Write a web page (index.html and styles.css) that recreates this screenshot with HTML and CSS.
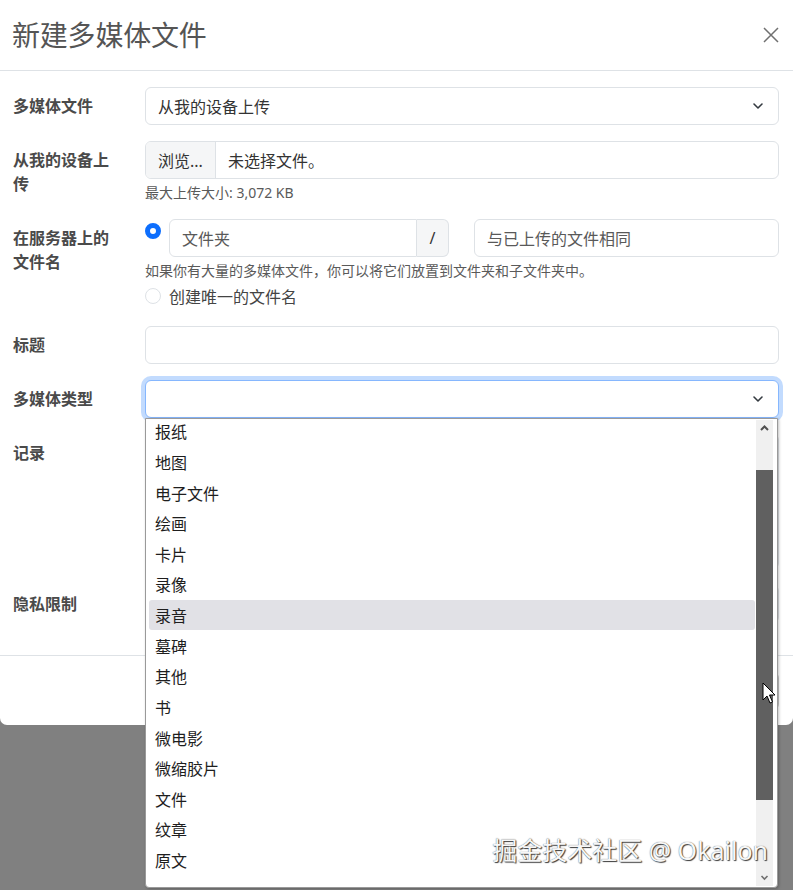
FILE: index.html
```html
<!DOCTYPE html>
<html lang="zh-CN">
<head>
<meta charset="utf-8">
<title>新建多媒体文件</title>
<link rel="stylesheet" href="styles.css">
</head>
<body>
<div class="modal">
  <div class="modal-header">
    <h1 class="modal-title">新建多媒体文件</h1>
    <svg class="btn-close" width="16" height="16" viewBox="0 0 16 16"><path d="M1 1L15 15M15 1L1 15" stroke="#707070" stroke-width="1.5" fill="none"/></svg>
  </div>
  <div class="modal-body">
    <div class="row">
      <div class="label">多媒体文件</div>
      <div class="field">
        <div class="control select"><span>从我的设备上传</span><svg class="chev" width="16" height="12" viewBox="0 0 16 12"><path d="M4 4L8 8L12 4" stroke="#343a40" stroke-width="1.6" fill="none" stroke-linecap="round" stroke-linejoin="round"/></svg></div>
      </div>
    </div>
    <div class="row">
      <div class="label">从我的设备上传</div>
      <div class="field">
        <div class="control file"><span class="file-btn">浏览...</span><span class="file-name">未选择文件。</span></div>
        <div class="help">最大上传大小: 3,072 KB</div>
      </div>
    </div>
    <div class="row">
      <div class="label">在服务器上的文件名</div>
      <div class="field">
        <div class="radio-line">
          <span class="radio checked"></span>
          <div class="input-group">
            <span class="control ig-input placeholder">文件夹</span>
            <span class="ig-addon">/</span>
          </div>
          <span class="control grow placeholder">与已上传的文件相同</span>
        </div>
        <div class="help">如果你有大量的多媒体文件，你可以将它们放置到文件夹和子文件夹中。</div>
        <div class="radio-line2"><span class="radio"></span><span class="radio-label">创建唯一的文件名</span></div>
      </div>
    </div>
    <div class="row">
      <div class="label">标题</div>
      <div class="field"><div class="control"></div></div>
    </div>
    <div class="row">
      <div class="label">多媒体类型</div>
      <div class="field">
        <div class="control select focused"><span></span><svg class="chev" width="16" height="12" viewBox="0 0 16 12"><path d="M4 4L8 8L12 4" stroke="#343a40" stroke-width="1.6" fill="none" stroke-linecap="round" stroke-linejoin="round"/></svg></div>
      </div>
    </div>
    <div class="row">
      <div class="label">记录</div>
      <div class="field"><div class="control textarea"></div></div>
    </div>
    <div class="row">
      <div class="label">隐私限制</div>
      <div class="field">
        <div class="control select"><span></span><svg class="chev" width="16" height="12" viewBox="0 0 16 12"><path d="M4 4L8 8L12 4" stroke="#343a40" stroke-width="1.6" fill="none" stroke-linecap="round" stroke-linejoin="round"/></svg></div>
      </div>
    </div>
  </div>
  <div class="modal-footer">
    <span class="btn">关闭</span>
    <span class="btn">保存</span>
  </div>
</div>

<div class="dropdown">
  <div class="list">
    <div class="list-inner">
      <div class="item">报纸</div>
      <div class="item">地图</div>
      <div class="item">电子文件</div>
      <div class="item">绘画</div>
      <div class="item">卡片</div>
      <div class="item">录像</div>
      <div class="item active">录音</div>
      <div class="item">墓碑</div>
      <div class="item">其他</div>
      <div class="item">书</div>
      <div class="item">微电影</div>
      <div class="item">微缩胶片</div>
      <div class="item">文件</div>
      <div class="item">纹章</div>
      <div class="item">原文</div>
    </div>
  </div>
  <div class="scrollbar">
    <div class="sb-btn"><svg width="17" height="17" viewBox="0 0 17 17"><path d="M5 10L8.5 6.5L12 10" stroke="#505050" stroke-width="2" fill="none"/></svg></div>
    <div class="sb-gap-top"></div>
    <div class="sb-thumb"></div>
    <div class="sb-gap-bottom"></div>
    <div class="sb-btn"><svg width="17" height="17" viewBox="0 0 17 17"><path d="M5.5 7L8.5 10L11.5 7" stroke="#707070" stroke-width="1.6" fill="none"/></svg></div>
  </div>
</div>

<svg class="cursor" width="14" height="24" viewBox="0 0 14 24"><path d="M1 1L1 18L5 14L8 21L10.5 20L7.5 13L13 13Z" fill="#fff" stroke="#000" stroke-width="1" stroke-linejoin="round"/></svg>

<div class="watermark">掘金技术社区 @ Okailon</div>
</body>
</html>
```

FILE: styles.css
```css
* { box-sizing: border-box; }

html, body {
  margin: 0;
  padding: 0;
}

body {
  background: #808080;
  width: 793px;
  height: 890px;
  overflow: hidden;
  position: relative;
  font-family: "Noto Sans", "Noto Sans CJK SC", sans-serif;
  font-size: 16px;
  color: #333;
}

.modal {
  background: #fff;
  border-radius: 0 0 7px 7px;
  width: 793px;
}

.modal-header {
  height: 71px;
  border-bottom: 1px solid #dee2e6;
  display: flex;
  align-items: center;
  justify-content: space-between;
  padding: 0 14px 0 12px;
}

.modal-title {
  margin: 0;
  font-size: 28px;
  font-weight: 400;
  color: #555;
  line-height: 34px;
  letter-spacing: -0.2px;
}

.btn-close {
  display: block;
  margin-top: 0;
}

.modal-body {
  padding: 16px 14px 16px 13px;
}

.row {
  display: flex;
  margin-bottom: 16px;
}

.label {
  width: 132px;
  flex: none;
  padding: 7px 26px 0 0;
  font-weight: 700;
  font-size: 16px;
  line-height: 24px;
  color: #4a4a4a;
}

.field {
  flex: 1;
  min-width: 0;
}

.control {
  height: 38px;
  border: 1px solid #dee2e6;
  border-radius: 6px;
  padding: 0 12px;
  display: flex;
  align-items: center;
  background: #fff;
  font-size: 16px;
  color: #333;
}

.select {
  justify-content: space-between;
  padding-right: 12px;
}

.chev { display: block; }

.focused {
  border-color: #86b7fe;
  box-shadow: 0 0 0 4px rgba(13, 110, 253, 0.25);
}

.textarea { height: 135px; }

.file {
  padding: 0;
  overflow: hidden;
}

.file-btn {
  height: 100%;
  display: flex;
  align-items: center;
  padding: 0 12px;
  background: #f5f6f7;
  border-right: 1px solid #dee2e6;
  color: #333;
}

.file-name {
  padding-left: 12px;
  color: #333;
}

.help {
  margin-top: 3px;
  font-size: 14px;
  line-height: 21px;
  color: #5a5a5a;
}

.radio-line {
  display: flex;
  align-items: flex-start;
}

.radio {
  width: 16px;
  height: 16px;
  border-radius: 50%;
  border: 1px solid #dee2e6;
  background: #fff;
  flex: none;
  margin-top: 4px;
  margin-right: 8px;
}

.radio.checked {
  border: 5px solid #0d6efd;
}

.input-group {
  display: flex;
  width: 280px;
  flex: none;
  margin-right: 25px;
}

.ig-input {
  flex: 1;
  border-radius: 6px 0 0 6px;
}

.ig-addon {
  width: 32px;
  height: 38px;
  border: 1px solid #dee2e6;
  border-left: none;
  border-radius: 0 6px 6px 0;
  background: #f5f6f7;
  display: flex;
  align-items: center;
  justify-content: center;
  color: #333;
  font-size: 16px;
}

.grow { flex: 1; }

.placeholder { color: #595959; }

.radio-line2 {
  display: flex;
  align-items: center;
  height: 24px;
  margin-top: 3px;
  margin-bottom: 2px;
}

.radio-line2 .radio {
  margin-top: 0;
}

.radio-label {
  color: #444;
  font-size: 16px;
}

.modal-footer {
  height: 70px;
  border-top: 1px solid #dee2e6;
  display: flex;
  align-items: center;
  justify-content: flex-end;
  gap: 8px;
  padding-right: 14px;
}

.btn {
  height: 38px;
  padding: 0 14px;
  border: 1px solid #c8c8c8;
  border-radius: 6px;
  display: flex;
  align-items: center;
  color: #333;
}

/* native select popup overlay */
.dropdown {
  position: absolute;
  left: 145px;
  top: 418px;
  width: 633px;
  height: 470px;
  background: #fff;
  border: 1px solid #9a9a9a;
  border-radius: 0 0 4px 4px;
  box-shadow: 1px 1px 3px rgba(0, 0, 0, 0.25);
  display: flex;
  padding-right: 4px;
}

.list {
  flex: 1;
  overflow: hidden;
}

.list-inner {
  margin-top: -3px;
}

.item {
  height: 30.64px;
  display: flex;
  align-items: center;
  margin: 0 1px 0 3px;
  padding-left: 6px;
  font-size: 16px;
  color: #1e1e1e;
  border-radius: 3px;
}

.item.active {
  background: #e1e1e6;
}

.scrollbar {
  width: 17px;
  flex: none;
  margin-top: 1px;
  margin-bottom: 1px;
  background: #f0f0f0;
  display: flex;
  flex-direction: column;
}

.sb-btn {
  height: 17px;
  flex: none;
}

.sb-btn svg { display: block; }

.sb-gap-top { height: 33px; flex: none; }

.sb-thumb {
  height: 330px;
  background: #606060;
  flex: none;
}

.sb-gap-bottom { flex: 1; }

.cursor {
  position: absolute;
  left: 762px;
  top: 682px;
}

.watermark {
  position: absolute;
  right: 25px;
  top: 834px;
  font-size: 25px;
  line-height: 32px;
  color: #f7f7f7;
  text-shadow: 1px 1px 1px #3a3a3a, 0 0 1px #555;
  font-family: "Noto Sans", "Noto Sans CJK SC", sans-serif;
  white-space: nowrap;
}
```
